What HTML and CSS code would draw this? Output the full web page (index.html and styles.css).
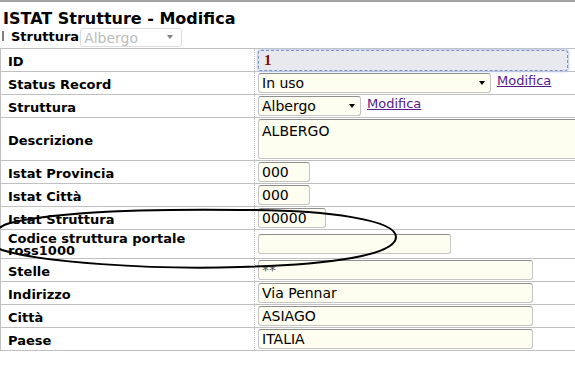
FILE: index.html
```html
<!DOCTYPE html>
<html>
<head>
<meta charset="utf-8">
<title>ISTAT Strutture - Modifica</title>
<link rel="stylesheet" href="styles.css">
</head>
<body>
<div class="topbar"></div>
<h1 class="title">ISTAT Strutture - Modifica</h1>
<div class="filter">
  <span class="pipe"></span>
  <span class="filter-label">Struttura</span>
  <span class="sel sel-disabled"><select disabled><option>Albergo</option></select></span>
</div>
<div class="form">
  <div class="row"><div class="label">ID</div><div class="value"><input class="field field-id" type="text" value="1" readonly></div></div>
  <div class="row"><div class="label">Status Record</div><div class="value value-link"><span class="sel sel-status"><select><option>In uso</option></select></span><a class="link" href="#">Modifica</a></div></div>
  <div class="row"><div class="label">Struttura</div><div class="value value-link"><span class="sel sel-struttura"><select><option>Albergo</option></select></span><a class="link" href="#">Modifica</a></div></div>
  <div class="row row-tall"><div class="label">Descrizione</div><div class="value value-top"><textarea class="field field-area">ALBERGO</textarea></div></div>
  <div class="row"><div class="label">Istat Provincia</div><div class="value"><input class="field w-3" type="text" value="000"></div></div>
  <div class="row"><div class="label">Istat Città</div><div class="value"><input class="field w-3" type="text" value="000"></div></div>
  <div class="row"><div class="label">Istat Struttura</div><div class="value"><input class="field w-5" type="text" value="00000"></div></div>
  <div class="row row-two"><div class="label label-two">Codice struttura portale<br>ross1000</div><div class="value"><input class="field w-md" type="text" value=""></div></div>
  <div class="row"><div class="label">Stelle</div><div class="value"><input class="field w-lg stars" type="text" value="**"></div></div>
  <div class="row"><div class="label">Indirizzo</div><div class="value"><input class="field w-lg" type="text" value="Via Pennar"></div></div>
  <div class="row"><div class="label">Città</div><div class="value"><input class="field w-lg" type="text" value="ASIAGO"></div></div>
  <div class="row"><div class="label">Paese</div><div class="value"><input class="field w-lg" type="text" value="ITALIA"></div></div>
</div>
<svg class="mark" width="575" height="378" viewBox="0 0 575 378">
  <path d="M396,237 C396,220 330,210 240,210 C150,209 60,211 10,223 C-8,228 -14,244 2,250 C40,262 150,270 240,267 C330,265 396,255 396,237 Z" fill="none" stroke="#000" stroke-width="2"/>
</svg>
</body>
</html>
```
FILE: styles.css
```css
html, body {
  margin: 0;
  padding: 0;
  background: #fff;
  overflow: hidden;
}
body {
  font-family: "DejaVu Sans", Verdana, sans-serif;
  color: #000;
  position: relative;
  width: 575px;
  height: 378px;
}
.topbar {
  height: 2px;
  background: #a3a3a3;
}
.title {
  margin: 8px 0 0 3px;
  font-size: 16px;
  line-height: 18px;
  font-weight: bold;
}
.filter {
  display: flex;
  align-items: flex-start;
  height: 19px;
  margin-bottom: 1px;
}
.pipe {
  width: 2px;
  height: 10px;
  background: #808080;
  margin: 3px 0 0 2px;
}
.filter-label {
  font-size: 13px;
  font-weight: bold;
  line-height: 15px;
  margin: 0 1px 0 7px;
  padding-top: 1px;
}
.sel {
  position: relative;
  display: inline-block;
}
.sel::after {
  content: "";
  position: absolute;
  right: 6px;
  top: 8px;
  border-left: 3.5px solid transparent;
  border-right: 3.5px solid transparent;
  border-top: 4px solid #000;
}
.sel select {
  appearance: none;
  -webkit-appearance: none;
  box-sizing: border-box;
  font-family: "DejaVu Sans", Verdana, sans-serif;
  font-size: 14px;
  height: 20px;
  margin: 0;
  padding: 0 16px 0 3px;
  border: 1px solid #c4c4c4;
  border-top-color: #8f8f8f;
  border-radius: 3px;
  background: #fdfdf0;
  color: #000;
  line-height: 18px;
}
.sel-disabled select {
  width: 102px;
  height: 19px;
  background: #fff;
  color: #a0a0a0;
  border-color: #cfcfcf;
}
.sel-disabled::after {
  border-top-color: #808080;
  top: 7px;
  right: 9px;
}
.sel-status select { width: 233px; }
.sel-struttura select { width: 103px; }
.form {
  width: 640px;
  border-top: 1px solid #c0c0c0;
  border-left: 1px solid #c0c0c0;
}
.row {
  display: flex;
  height: 22px;
  border-bottom: 1px solid #c0c0c0;
}
.row-tall { height: 42px; }
.row-two { height: 28px; }
.label {
  box-sizing: border-box;
  flex: 0 0 254px;
  display: flex;
  align-items: center;
  padding: 2px 0 0 7px;
  font-size: 13px;
  line-height: 15px;
  font-weight: bold;
  border-right: 1px dotted #c0c0c0;
}
.label-two {
  line-height: 12px;
  padding-top: 1px;
}
.value {
  display: flex;
  align-items: center;
  padding-left: 3px;
}
.value-link {
  align-items: flex-start;
  padding-top: 1px;
}
.value-top {
  align-items: flex-start;
  padding-top: 1px;
}
.link {
  font-size: 13px;
  line-height: 15px;
  color: #551a8b;
  margin-left: 6px;
}
.field {
  box-sizing: border-box;
  font-family: "DejaVu Sans", Verdana, sans-serif;
  font-size: 14px;
  height: 20px;
  margin: 0;
  padding: 0 3px;
  border: 1px solid #c4c4c4;
  border-top-color: #8f8f8f;
  border-radius: 3px;
  background: #fdfdf0;
  color: #000;
  display: block;
}
.field-id {
  width: 310px;
  height: 21px;
  background: #e7e9ee;
  border: 1px dashed #7f8fb5;
  box-shadow: 0 0 2px 1px #b5c8ec;
  font-family: "Liberation Serif", "Times New Roman", serif;
  font-weight: bold;
  font-size: 15px;
  color: #7a0d0d;
  padding-left: 5px;
}
.field-area {
  width: 330px;
  height: 40px;
  resize: none;
  padding: 3px;
  line-height: 16px;
  overflow: hidden;
}
.w-3 { width: 52px; }
.w-5 { width: 68px; }
.w-md { width: 193px; }
.w-lg { width: 275px; }
.stars { color: #555; }
.mark {
  position: absolute;
  left: 0;
  top: 0;
  pointer-events: none;
  overflow: visible;
}
```
